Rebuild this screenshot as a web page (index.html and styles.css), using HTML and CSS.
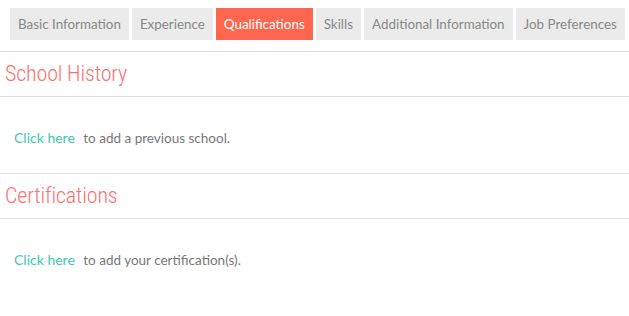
FILE: index.html
```html
<!DOCTYPE html>
<html>
<head>
<meta charset="utf-8">
<link rel="stylesheet" href="styles.css">
</head>
<body>
<nav class="tabs">
  <a class="tab">Basic Information</a>
  <a class="tab">Experience</a>
  <a class="tab active">Qualifications</a>
  <a class="tab">Skills</a>
  <a class="tab">Additional Information</a>
  <a class="tab">Job Preferences</a>
</nav>
<section class="section">
  <h2 class="section-title">School History</h2>
  <p class="section-body"><a class="link">Click here</a> to add a previous school.</p>
</section>
<section class="section">
  <h2 class="section-title">Certifications</h2>
  <p class="section-body"><a class="link">Click here</a> to add your certification(s).</p>
</section>
</body>
</html>
```
FILE: styles.css
```css
html, body {
  margin: 0;
  padding: 0;
  background: #fff;
}
body {
  font-family: "Lato", "Open Sans", sans-serif;
  color: #777;
}
.tabs {
  display: flex;
  gap: 3px;
  padding: 8px 0 0 10px;
  margin-bottom: 11px;
}
.tab {
  display: block;
  flex: none;
  white-space: nowrap;
  height: 32px;
  line-height: 32px;
  padding: 0 8px;
  font-size: 13.4px;
  background: #ebebeb;
  color: #888;
}
.tab.active {
  background: #ff6650;
  color: #fff;
}
.section {
  border-top: 1px solid #d8e2e6;
}
.section-title {
  margin: 0;
  height: 44px;
  line-height: 44px;
  padding-left: 5px;
  font-family: "Roboto", sans-serif;
  font-weight: 300;
  font-stretch: 75%;
  font-size: 22px;
  letter-spacing: -0.15px;
  color: #ff6f6f;
  border-bottom: 1px solid #d8e2e6;
}
.section-body {
  margin: 0;
  padding: 31px 0 25px 14px;
  line-height: 20px;
  font-size: 13.5px;
}
.link {
  color: #3cc8b4;
  font-size: 14px;
  margin-right: 5px;
}
```
